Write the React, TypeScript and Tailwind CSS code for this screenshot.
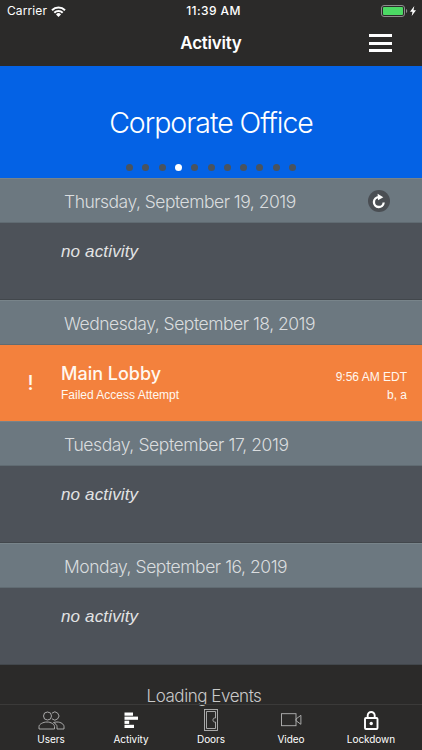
import type { ReactNode } from "react";
import { clsx } from "clsx";

interface ActivityEvent {
  door: string;
  message: string;
  time: string;
  user: string;
}

interface Day {
  label: string;
  tracking: string;
  events: ActivityEvent[];
  refreshable?: boolean;
}

const days: Day[] = [
  { label: "Thursday, September 19, 2019", tracking: "tracking-[-0.5px]", events: [], refreshable: true },
  {
    label: "Wednesday, September 18, 2019",
    tracking: "tracking-[-0.48px]",
    events: [
      { door: "Main Lobby", message: "Failed Access Attempt", time: "9:56 AM EDT", user: "b, a" },
    ],
  },
  { label: "Tuesday, September 17, 2019", tracking: "tracking-[-0.4px]", events: [] },
  { label: "Monday, September 16, 2019", tracking: "tracking-[-0.45px]", events: [] },
];

const PAGE_COUNT = 11;
const ACTIVE_PAGE = 3;

function StatusBar() {
  return (
    <div className="grid h-[22px] grid-cols-3 items-center pl-[7px] pr-[5px] text-[12px]">
      <div className="flex items-center gap-1">
        <span className="tracking-[0.1px]">Carrier</span>
        <svg width="15" height="11" viewBox="0 0 15 11" fill="none" stroke="currentColor" strokeWidth="2">
          <path d="M1 4.2a9.2 9.2 0 0 1 13 0" />
          <path d="M3.3 6.7a5.9 5.9 0 0 1 8.4 0" />
          <path d="M7.5 11 5 8.4a3.5 3.5 0 0 1 5 0z" fill="currentColor" stroke="none" />
        </svg>
      </div>
      <span className="pl-[3px] text-center font-medium tracking-[0.4px]">11:39 AM</span>
      <div className="flex items-center justify-end">
        <svg width="36" height="12" viewBox="0 0 36 12">
          <rect x="0.5" y="0.5" width="23" height="11" rx="2.5" fill="none" stroke="#8c8c8c" />
          <rect x="2" y="2" width="20" height="8" rx="1" fill="#4cd964" />
          <path d="M25 4v4c.8-.3 1.2-1 1.2-2S25.8 4.3 25 4z" fill="#8c8c8c" />
          <path d="M33.3 1 29 6.7h2.5L30.7 11 35 5.2h-2.5z" fill="#fff" />
        </svg>
      </div>
    </div>
  );
}

function NavBar() {
  return (
    <div className="grid h-11 grid-cols-[1fr_auto_1fr] items-center pr-[30px]">
      <span />
      <h1 className="pl-[30px] text-[17px] font-semibold tracking-[-0.25px]">Activity</h1>
      <button className="mb-[2px] flex w-[23px] flex-col gap-[4.5px] justify-self-end" aria-label="Menu">
        <span className="h-[3px] bg-white" />
        <span className="h-[3px] bg-white" />
        <span className="h-[3px] bg-white" />
      </button>
    </div>
  );
}

function SiteBanner() {
  return (
    <div className="flex h-[112px] flex-col items-center bg-[#0462e5]">
      <h2 className="mt-9 text-[28.5px] leading-[42px] font-light tracking-[-1.05px] whitespace-nowrap">
        Corporate Office
      </h2>
      <div className="mt-5 flex gap-[9.3px]">
        {Array.from({ length: PAGE_COUNT }, (_, i) => (
          <span
            key={i}
            className={clsx("size-[7px] rounded-full", i === ACTIVE_PAGE ? "bg-white" : "bg-[#49535f]")}
          />
        ))}
      </div>
    </div>
  );
}

function RefreshIcon() {
  return (
    <svg width="22" height="22" viewBox="0 0 22 22">
      <circle cx="11" cy="11" r="11" fill="#4a4e53" />
      <path d="M10.8 7.2a4.9 4.9 0 1 0 4.9 5.3" fill="none" stroke="#fff" strokeWidth="2.3" />
      <path d="M9.6 3.7 15.3 7.3 10 10.3z" fill="#fff" />
    </svg>
  );
}

function DaySection({ day }: { day: Day }) {
  return (
    <section>
      <div className="flex h-[45px] items-center justify-between border-y border-t-[#78848a] border-b-[#606b72] bg-[#6c7880] pr-8 pl-16">
        <span className={clsx("pt-[3px] text-[17.5px] font-light whitespace-nowrap text-[#dadddf]", day.tracking)}>
          {day.label}
        </span>
        {day.refreshable && <RefreshIcon />}
      </div>
      {day.events.length === 0 ? (
        <div className="h-[76.7px] border-b border-[#42474c] bg-[#4d5259] pt-4 pl-[61px]">
          <span className="font-['Liberation_Sans',sans-serif] text-[17px] leading-6 tracking-[0.15px] text-[#e2e3e4] italic">
            no activity
          </span>
        </div>
      ) : (
        day.events.map((event) => <EventRow key={event.time} event={event} />)
      )}
    </section>
  );
}

function EventRow({ event }: { event: ActivityEvent }) {
  return (
    <div className="flex h-[76.7px] items-center bg-[#f3813d] pr-[15px] text-[#fff8f0]">
      <span className="w-[61px] text-center text-[20px] font-medium">!</span>
      <div className="flex flex-1 flex-col">
        <span className="text-[18px] leading-[23px] font-medium">{event.door}</span>
        <span className="font-['Liberation_Sans',sans-serif] text-[12px] leading-5">{event.message}</span>
      </div>
      <div className="flex flex-col pt-[5px] text-right font-['Liberation_Sans',sans-serif] text-[12px] leading-[18px]">
        <span>{event.time}</span>
        <span>{event.user}</span>
      </div>
    </div>
  );
}

function UsersIcon() {
  return (
    <svg width="27" height="19" viewBox="0 0 27 19" fill="none" stroke="#b5b5b5" strokeWidth="0.9">
      <circle cx="9.5" cy="5" r="4" />
      <path d="M14 2.2a4 4 0 1 1 0 5.6" />
      <path d="M1 18v-2.5c0-2.2 4-4.5 8-4.5s7.5 2.3 7.5 4.5V18z" />
      <path d="M15.5 11.6c1-.4 2-.6 3.5-.6 4 0 7 2.3 7 4.5V18h-7v-2.5c0-1.5-1.5-3-3.5-3.9z" />
    </svg>
  );
}

function ActivityIcon() {
  return (
    <svg width="15" height="17" viewBox="0 0 15 17" fill="#fff">
      <rect x="0.5" y="0.5" width="8.5" height="3.2" />
      <rect x="0.5" y="4.6" width="13.5" height="3.2" />
      <rect x="0.5" y="8.7" width="4.7" height="3.2" />
      <rect x="0.5" y="12.8" width="9.5" height="3.2" />
    </svg>
  );
}

function DoorIcon() {
  return (
    <svg width="14" height="22" viewBox="0 0 14 22" fill="none" stroke="#b5b5b5" strokeWidth="0.9">
      <rect x="0.5" y="0.5" width="13" height="21" />
      <path d="M11.5 9V2.5h-9v17h9V13" />
      <path d="M11.5 9h-1c-1 0-1.5.8-1.5 2s.5 2 1.5 2h1" />
    </svg>
  );
}

function VideoIcon() {
  return (
    <svg width="21" height="14" viewBox="0 0 21 14" fill="none" stroke="#b5b5b5" strokeWidth="0.9">
      <rect x="0.5" y="0.7" width="14.5" height="12" />
      <path d="M15 6 19.9 2.3v9L15 7.7z" />
    </svg>
  );
}

function LockIcon() {
  return (
    <svg width="15" height="19" viewBox="0 0 15 19" fill="none" stroke="#fff" strokeWidth="1.9">
      <rect x="1" y="7" width="12.5" height="11" rx="1" />
      <path d="M3.7 7V4.5a3.5 3.5 0 0 1 7 0V7" />
      <circle cx="7.25" cy="12.5" r="1.7" fill="#fff" stroke="none" />
    </svg>
  );
}

const tabs: { label: string; icon: ReactNode }[] = [
  { label: "Users", icon: <UsersIcon /> },
  { label: "Activity", icon: <ActivityIcon /> },
  { label: "Doors", icon: <DoorIcon /> },
  { label: "Video", icon: <VideoIcon /> },
  { label: "Lockdown", icon: <LockIcon /> },
];

function TabBar() {
  return (
    <nav className="flex h-[46px] justify-center border-t border-[#3b3a39]">
      {tabs.map((tab) => (
        <div key={tab.label} className="flex w-20 flex-col items-center">
          <div className="flex h-[29px] items-center pt-px">{tab.icon}</div>
          <span className="text-[10px] leading-[11px] tracking-[-0.05px]">{tab.label}</span>
        </div>
      ))}
    </nav>
  );
}

export default function App() {
  return (
    <div className="flex h-[750px] w-[422px] flex-col bg-[#2b2a29] font-['Inter','Liberation_Sans',sans-serif] text-white">
      <header className="shrink-0">
        <StatusBar />
        <NavBar />
      </header>
      <SiteBanner />
      <main className="flex min-h-0 flex-1 flex-col">
        {days.map((day) => (
          <DaySection key={day.label} day={day} />
        ))}
        <p className="pt-[23px] pr-[14px] text-center text-[17px] leading-4 font-light tracking-[-0.45px] text-[#c9c9c9]">
          Loading Events
        </p>
      </main>
      <TabBar />
    </div>
  );
}
